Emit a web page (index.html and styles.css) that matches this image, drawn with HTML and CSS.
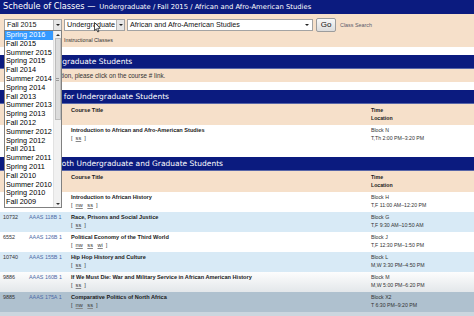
FILE: index.html
```html
<!DOCTYPE html>
<html lang="en">
<head>
<meta charset="utf-8">
<title>Schedule of Classes</title>
<link rel="stylesheet" href="styles.css">
</head>
<body>
<header class="titlebar">
  <span class="t-main">Schedule of Classes —</span>
  <span class="t-sub">Undergraduate / Fall 2015 / African and Afro-American Studies</span>
</header>

<form class="search">
  <div class="controls">
    <div class="select sel-term"><span>Fall 2015</span><span class="arrow-btn"></span></div>
    <div class="select sel-level"><span>Undergraduate</span><span class="arrow-btn"></span></div>
    <div class="select sel-subject"><span>African and Afro-American Studies</span><span class="arrow-plain"></span></div>
    <button type="button" class="go">Go</button>
    <a class="class-search">Class Search</a>
  </div>
  <div class="note">Instructional Classes</div>
</form>

<main class="content">
  <section class="block">
    <h2 class="bar"><span class="covered">Notes for Under</span>graduate Students</h2>
    <p class="info"><span class="covered">For detailed informa</span>tion, please click on the course # link.</p>
  </section>

  <section class="block block-table">
    <h2 class="bar"><span class="covered">(1-99) Primarily </span>for Undergraduate Students</h2>
    <div class="row thead">
      <div class="num"></div><div class="code"></div>
      <div class="title">Course Title</div>
      <div class="when">Time<br>Location</div>
    </div>
    <div class="row">
      <div class="num"></div><div class="code"></div>
      <div class="title">Introduction to African and Afro-American Studies<br><span class="links">[ <a>ss</a> ]</span></div>
      <div class="when">Block N<br>T,Th 2:00 PM–3:20 PM</div>
    </div>
  </section>

  <section class="block">
    <h2 class="bar"><span class="covered">(100-199) For B</span>oth Undergraduate and Graduate Students</h2>
    <div class="row thead">
      <div class="num"></div><div class="code"></div>
      <div class="title">Course Title</div>
      <div class="when">Time<br>Location</div>
    </div>
    <div class="row">
      <div class="num"></div><div class="code"></div>
      <div class="title">Introduction to African History<br><span class="links">[ <a>nw</a> <a>ss</a> ]</span></div>
      <div class="when">Block H<br>T,F 11:00 AM–12:20 PM</div>
    </div>
    <div class="row alt">
      <div class="num">10732</div><div class="code"><a>AAAS 118B 1</a></div>
      <div class="title">Race, Prisons and Social Justice<br><span class="links">[ <a>ss</a> ]</span></div>
      <div class="when">Block G<br>T,F 9:30 AM–10:50 AM</div>
    </div>
    <div class="row">
      <div class="num">6552</div><div class="code"><a>AAAS 126B 1</a></div>
      <div class="title">Political Economy of the Third World<br><span class="links">[ <a>nw</a> <a>ss</a> <a>wi</a> ]</span></div>
      <div class="when">Block J<br>T,F 12:30 PM–1:50 PM</div>
    </div>
    <div class="row alt">
      <div class="num">10740</div><div class="code"><a>AAAS 155B 1</a></div>
      <div class="title">Hip Hop History and Culture<br><span class="links">[ <a>ss</a> ]</span></div>
      <div class="when">Block L<br>M,W 3:30 PM–4:50 PM</div>
    </div>
    <div class="row fade">
      <div class="num">9886</div><div class="code"><a>AAAS 160B 1</a></div>
      <div class="title">If We Must Die: War and Military Service in African American History<br><span class="links">[ <a>ss</a> ]</span></div>
      <div class="when">Block M<br>M,W 5:00 PM–6:20 PM</div>
    </div>
    <div class="row shade">
      <div class="num">9885</div><div class="code"><a>AAAS 175A 1</a></div>
      <div class="title">Comparative Politics of North Africa<br><span class="links">[ <a>nw</a> <a>ss</a> ]</span></div>
      <div class="when">Block X2<br>T 6:30 PM–9:20 PM</div>
    </div>
    <div class="row tail"></div>
  </section>
</main>

<div class="listbox">
  <ul class="options">
    <li class="selected">Spring 2016</li>
    <li>Fall 2015</li>
    <li>Summer 2015</li>
    <li>Spring 2015</li>
    <li>Fall 2014</li>
    <li>Summer 2014</li>
    <li>Spring 2014</li>
    <li>Fall 2013</li>
    <li>Summer 2013</li>
    <li>Spring 2013</li>
    <li>Fall 2012</li>
    <li>Summer 2012</li>
    <li>Spring 2012</li>
    <li>Fall 2011</li>
    <li>Summer 2011</li>
    <li>Spring 2011</li>
    <li>Fall 2010</li>
    <li>Summer 2010</li>
    <li>Spring 2010</li>
    <li>Fall 2009</li>
  </ul>
  <div class="scrollbar">
    <span class="sb-up"></span>
    <span class="thumb"><span class="grip"></span></span>
    <span class="sb-space"></span>
    <span class="sb-down"></span>
  </div>
</div>

<svg class="cursor" width="7" height="11" viewBox="0 0 7 11">
  <path d="M0.5 0.5 L0.5 8.5 L2.4 6.8 L3.8 10 L5 9.4 L3.7 6.4 L6.2 6.3 Z" fill="#fff" stroke="#222" stroke-width="0.8" stroke-linejoin="round"/>
</svg>
</body>
</html>
```

FILE: styles.css
```css
html, body {
  margin: 0;
  padding: 0;
}
body {
  width: 474px;
  height: 316px;
  overflow: hidden;
  position: relative;
  background: #ffffff;
  font-family: "Liberation Sans", Arial, sans-serif;
  color: #222;
}

/* title bar */
.titlebar {
  height: 14px;
  background: #0b1b7f;
  color: #ffffff;
  font-family: "DejaVu Sans", Verdana, sans-serif;
  display: flex;
  align-items: baseline;
  gap: 4px;
  padding-left: 3px;
  line-height: 13px;
  white-space: nowrap;
}
.t-main { font-size: 8.2px; }
.t-sub { font-size: 6.8px; }

/* search form */
.search {
  height: 33px;
  box-sizing: border-box;
  background: #f6e0ca;
  padding: 4px 4px 0;
  margin: 0;
}
.controls {
  display: flex;
  align-items: center;
  gap: 2px;
  height: 13px;
}
.select {
  height: 12px;
  box-sizing: border-box;
  border: 1px solid #a3a3a3;
  background: #ffffff;
  font-size: 7.2px;
  color: #111;
  display: flex;
  align-items: center;
  justify-content: space-between;
  padding-left: 2px;
  white-space: nowrap;
}
.sel-term { width: 58px; }
.sel-level { width: 61px; }
.sel-subject { width: 186px; padding-right: 3px; }
.arrow-btn {
  width: 8px;
  height: 10px;
  box-sizing: border-box;
  background: #e6e6e6;
  border-left: 1px solid #b5b5b5;
  display: flex;
  align-items: center;
  justify-content: center;
}
.arrow-btn::after,
.arrow-plain::after {
  content: "";
  border-left: 2px solid transparent;
  border-right: 2px solid transparent;
  border-top: 2px solid #222;
}
.arrow-plain {
  display: flex;
  align-items: center;
}
.go {
  margin-left: 1px;
  width: 20px;
  height: 14px;
  padding: 0;
  border: 1px solid #9c9c9c;
  border-radius: 2px;
  background: linear-gradient(#f8f8f8, #dcdcdc);
  font-family: "Liberation Sans", Arial, sans-serif;
  font-size: 8px;
  color: #111;
}
.class-search {
  margin-left: 2px;
  font-size: 5.4px;
  color: #5a5a6a;
}
.note {
  margin: 6px 0 0 60px;
  font-size: 5.3px;
  line-height: 6px;
  color: #333;
}

/* content */
.content {
  display: flex;
  flex-direction: column;
  gap: 8px;
  padding-top: 8px;
}
.block {
  display: flex;
  flex-direction: column;
}
.block-table { padding-bottom: 4px; }
.bar {
  margin: 0;
  height: 14px;
  box-sizing: border-box;
  background: #0b1b7f;
  border-bottom: 1px solid #5866a8;
  color: #ffffff;
  font-family: "DejaVu Sans", Verdana, sans-serif;
  font-weight: normal;
  font-size: 7.5px;
  line-height: 13px;
  padding-left: 3px;
  white-space: nowrap;
}
.covered { visibility: hidden; }
.info {
  margin: 0;
  height: 13px;
  background: #f6e0ca;
  font-size: 6.3px;
  line-height: 13px;
  color: #333;
  padding-left: 5px;
  white-space: nowrap;
}

.row {
  display: grid;
  grid-template-columns: 26px 42px 300px 1fr;
  height: 20px;
  box-sizing: border-box;
  padding: 2px 0 0 3px;
  line-height: 7.5px;
  white-space: nowrap;
}
.thead {
  height: 21px;
  padding-top: 3px;
  background: #f6e0ca;
  font-weight: bold;
}
.thead .title { font-size: 5.6px; }
.num {
  font-size: 5.4px;
  color: #333;
}
.code {
  font-size: 5.4px;
  color: #4d6aa6;
}
.code a { color: inherit; }
.title {
  font-size: 5.6px;
  font-weight: bold;
  color: #1a1a1a;
}
.links {
  font-weight: normal;
  color: #333;
}
.links a {
  margin: 0 1.5px;
  text-decoration: underline;
  text-decoration-color: #888;
  color: #333;
}
.when {
  font-size: 5.2px;
  color: #333;
}
.thead .when { color: #1a1a1a; }

.alt { background: #d8eaf6; }
.fade { background: linear-gradient(#fdfdfd, #e3e7ea); }
.shade { background: #afc1cf; }
.tail { background: #cbd6df; height: 10px; }

/* open dropdown list */
.listbox {
  position: absolute;
  z-index: 10;
  left: 4px;
  top: 30px;
  width: 58px;
  height: 178px;
  box-sizing: border-box;
  border: 1px solid #808080;
  background: #ffffff;
  display: flex;
}
.options {
  flex: 1;
  margin: 0;
  padding: 0;
  list-style: none;
  font-size: 7.3px;
  color: #000000;
  background: #ffffff;
}
.options li {
  height: 8.8px;
  line-height: 8.8px;
  padding-left: 1px;
  white-space: nowrap;
}
.options li.selected {
  background: #3399ff;
  color: #ffffff;
}
.scrollbar {
  width: 7px;
  background: #f1f1f1;
  border-left: 1px solid #e2e2e2;
  display: flex;
  flex-direction: column;
  align-items: center;
}
.sb-up, .sb-down {
  height: 7px;
  display: flex;
  align-items: center;
  justify-content: center;
}
.sb-up::after {
  content: "";
  border-left: 2px solid transparent;
  border-right: 2px solid transparent;
  border-bottom: 2px solid #333;
}
.sb-down::after {
  content: "";
  border-left: 2px solid transparent;
  border-right: 2px solid transparent;
  border-top: 2px solid #333;
}
.thumb {
  width: 6px;
  height: 82px;
  box-sizing: border-box;
  background: #dcdcdc;
  border: 1px solid #bdbdbd;
  display: flex;
  align-items: center;
  justify-content: center;
}
.grip {
  width: 3px;
  height: 3px;
  border-top: 1px solid #999;
  border-bottom: 1px solid #999;
  box-sizing: border-box;
}
.sb-space { flex: 1; }

.cursor {
  position: absolute;
  z-index: 11;
  left: 94px;
  top: 22px;
}
```
